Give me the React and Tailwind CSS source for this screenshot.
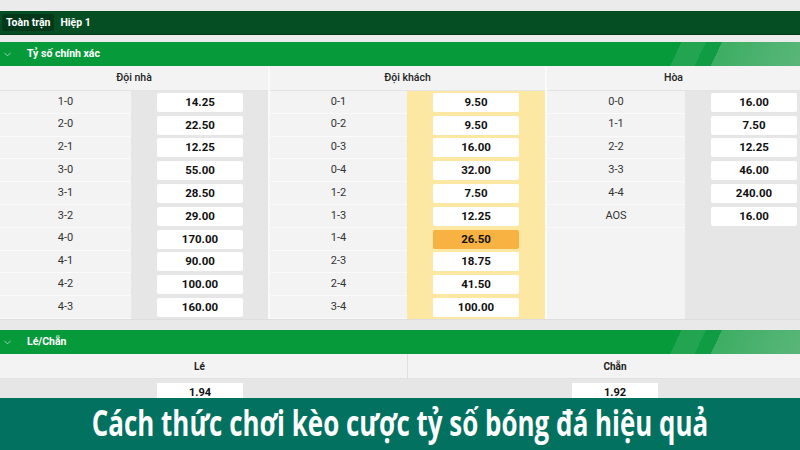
import React from "react";
import { ChevronDown } from "lucide-react";

const home = [
  ["1-0", "14.25"], ["2-0", "22.50"], ["2-1", "12.25"], ["3-0", "55.00"], ["3-1", "28.50"],
  ["3-2", "29.00"], ["4-0", "170.00"], ["4-1", "90.00"], ["4-2", "100.00"], ["4-3", "160.00"],
];
const away = [
  ["0-1", "9.50"], ["0-2", "9.50"], ["0-3", "16.00"], ["0-4", "32.00"], ["1-2", "7.50"],
  ["1-3", "12.25"], ["1-4", "26.50", true], ["2-3", "18.75"], ["2-4", "41.50"], ["3-4", "100.00"],
];
const draw = [
  ["0-0", "16.00"], ["1-1", "7.50"], ["2-2", "12.25"], ["3-3", "46.00"], ["4-4", "240.00"], ["AOS", "16.00"],
];

const greenBar =
  "bg-[linear-gradient(115deg,#079a3b_0%,#079a3b_84%,#22a450_84%,#22a450_87%,#109c42_87%,#109c42_89%,#3dae63_89%,#5ab679_100%)]";

function SectionHeader({ title }) {
  return (
    <div className={`h-[24px] flex items-center ${greenBar}`}>
      <ChevronDown size={11} strokeWidth={1.5} className="ml-[2px] text-white/80" />
      <span className="ml-[14px] text-[10.5px] font-bold text-white">{title}</span>
    </div>
  );
}

function Column({ title, rows, band, width, bandWidth }) {
  return (
    <div className="flex flex-col" style={{ width }}>
      <div className="h-[25px] flex items-center justify-center bg-[#f3f3f3] border-b border-[#e4e4e4] text-[10.5px] font-medium text-[#222]">
        {title}
      </div>
      <div className="flex flex-1">
        <div className="flex-1 flex flex-col bg-[#f3f3f3]">
          {rows.map(([label]) => (
            <div
              key={label}
              className="h-[22.8px] flex items-center justify-center border-b border-[#fafafa] text-[11px] text-[#333]"
            >
              {label}
            </div>
          ))}
        </div>
        <div className={`flex flex-col pl-[26px] ${band}`} style={{ width: bandWidth }}>
          {rows.map(([label, odd, hot]) => (
            <div key={label} className="h-[22.8px] flex items-center">
              <div
                className={`w-[86px] h-[19px] rounded-[2px] flex items-center justify-center text-[11.5px] font-bold text-[#111] ${
                  hot ? "bg-[#f8b242]" : "bg-white"
                }`}
              >
                {odd}
              </div>
            </div>
          ))}
        </div>
      </div>
    </div>
  );
}

export default function App() {
  return (
    <div className="w-[800px] h-[450px] overflow-hidden bg-[#ebebeb] flex flex-col font-['Roboto',sans-serif]">
      <div className="h-[11px] bg-[#ebebeb]" />
      <div className="h-[24px] bg-[#054d22] border-b border-[#033a18] flex items-center px-[2px] gap-[6px]">
        <span className="px-[4px] py-[1px] rounded-[2px] bg-[#03381a] text-white text-[10.5px] font-bold">Toàn trận</span>
        <span className="text-white text-[10.5px] font-bold">Hiệp 1</span>
      </div>
      <div className="h-[7px]" />
      <SectionHeader title="Tỷ số chính xác" />
      <div className="flex h-[253px] gap-[2px] bg-[#fafafa]">
        <Column title="Đội nhà" rows={home} band="bg-[#e6e6e6]" width={268} bandWidth={137} />
        <Column title="Đội khách" rows={away} band="bg-[#fce7a3]" width={275} bandWidth={138} />
        <Column title="Hòa" rows={draw} band="bg-[#e6e6e6]" width={253} bandWidth={115} />
      </div>
      <div className="h-[11px] bg-[#e9e9e9] border-t border-[#dedede]" />
      <SectionHeader title="Lé/Chẵn" />
      <div className="flex h-[25px] bg-[#f3f3f3] border-b border-[#e2e2e2] text-[10px] font-bold text-[#222]">
        <div className="w-[408px] flex items-center justify-center pr-[8px] border-r border-[#e0e0e0]">Lé</div>
        <div className="flex-1 flex items-center justify-center pl-[22px]">Chẵn</div>
      </div>
      <div className="flex h-[19px] bg-[#e6e6e6]">
        <div className="w-[408px] flex justify-center pt-[4px] pr-[8px]">
          <div className="w-[86px] h-[20px] bg-white flex items-center justify-center text-[11px] font-bold text-[#111]">1.94</div>
        </div>
        <div className="flex-1 flex justify-center pt-[4px] pl-[22px]">
          <div className="w-[86px] h-[20px] bg-white flex items-center justify-center text-[11px] font-bold text-[#111]">1.92</div>
        </div>
      </div>
      <div className="relative z-10 flex-1 bg-[#03715f] flex items-center justify-center">
        <span className="inline-block scale-x-[0.72] whitespace-nowrap text-white text-[36px] font-bold font-['Open_Sans',sans-serif] leading-none -mt-[2px]">
          Cách thức chơi kèo cược tỷ số bóng đá hiệu quả
        </span>
      </div>
    </div>
  );
}
